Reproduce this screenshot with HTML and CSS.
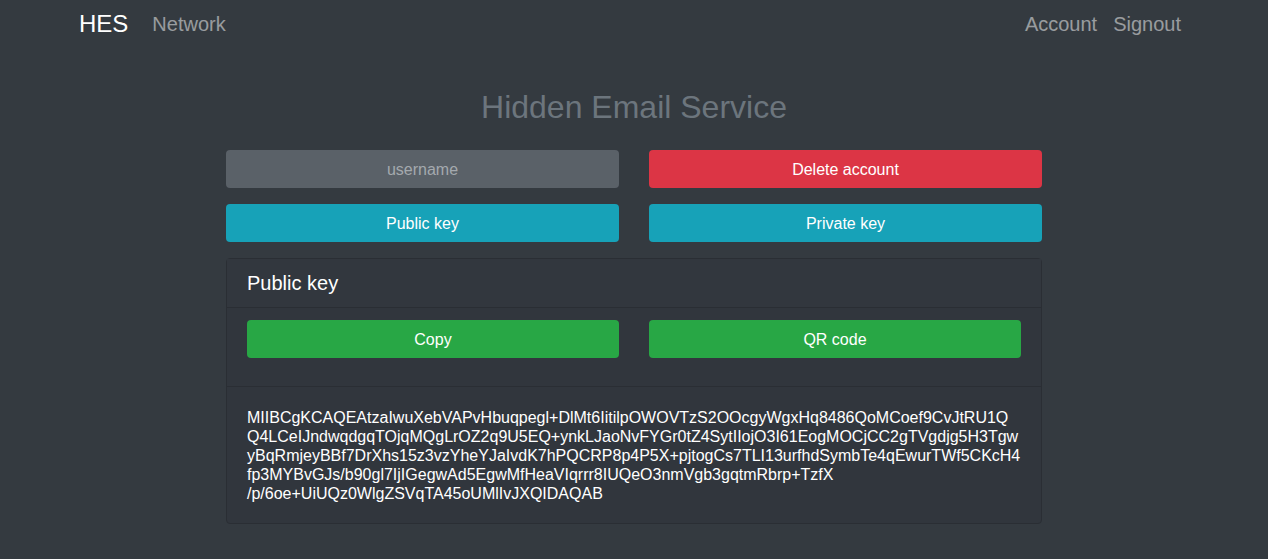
FILE: index.html
```html
<!DOCTYPE html>
<html lang="en">
<head>
<meta charset="utf-8">
<title>HES</title>
<link rel="stylesheet" href="styles.css">
</head>
<body>
<nav class="navbar">
  <div class="nav-left">
    <a class="brand" href="#">HES</a>
    <a class="nav-link" href="#">Network</a>
  </div>
  <div class="nav-right">
    <a class="nav-link" href="#">Account</a>
    <a class="nav-link" href="#">Signout</a>
  </div>
</nav>
<main class="main">
  <h1 class="title">Hidden Email Service</h1>
  <div class="grid">
    <div class="field">username</div>
    <button class="btn btn-danger">Delete account</button>
    <button class="btn btn-info">Public key</button>
    <button class="btn btn-info">Private key</button>
  </div>
  <section class="card">
    <div class="card-header">Public key</div>
    <div class="card-actions">
      <button class="btn btn-success">Copy</button>
      <button class="btn btn-success">QR code</button>
    </div>
    <div class="card-body">MIIBCgKCAQEAtzaIwuXebVAPvHbuqpegl+DlMt6IitilpOWOVTzS2OOcgyWgxHq8486QoMCoef9CvJtRU1Q<br>Q4LCeIJndwqdgqTOjqMQgLrOZ2q9U5EQ+ynkLJaoNvFYGr0tZ4SytIIojO3I61EogMOCjCC2gTVgdjg5H3Tgw<br>yBqRmjeyBBf7DrXhs15z3vzYheYJaIvdK7hPQCRP8p4P5X+pjtogCs7TLI13urfhdSymbTe4qEwurTWf5CKcH4<br>fp3MYBvGJs/b90gl7IjIGegwAd5EgwMfHeaVIqrrr8IUQeO3nmVgb3gqtmRbrp+TzfX<br>/p/6oe+UiUQz0WlgZSVqTA45oUMlIvJXQIDAQAB</div>
  </section>
</main>
</body>
</html>
```
FILE: styles.css
```css
* { box-sizing: border-box; }
html, body { margin: 0; padding: 0; }
body {
  background: #343a40;
  font-family: "Liberation Sans", Arial, sans-serif;
  color: #fff;
  font-size: 16px;
  min-height: 559px;
}
a { text-decoration: none; }
.navbar {
  width: 1110px;
  margin: 0 auto;
  height: 48px;
  display: flex;
  justify-content: space-between;
  align-items: center;
}
.nav-left, .nav-right { display: flex; align-items: center; }
.brand {
  color: #fff;
  font-size: 24px;
  margin-right: 24px;
  line-height: 1;
}
.nav-link {
  color: rgba(255,255,255,.5);
  font-size: 20px;
  line-height: 1;
}
.nav-right .nav-link { margin-left: 16px; }
.nav-right { margin-right: 8px; }
.main {
  width: 816px;
  margin: 0 auto;
}
.title {
  margin: 40px 0 23px;
  text-align: center;
  font-weight: 400;
  font-size: 32px;
  line-height: 39px;
  color: #6c757d;
}
.grid {
  display: grid;
  grid-template-columns: 1fr 1fr;
  column-gap: 30px;
  row-gap: 16px;
  margin-bottom: 16px;
}
.field, .btn {
  height: 38px;
  border-radius: 4px;
  border: 0;
  font-family: inherit;
  font-size: 16px;
  display: flex;
  align-items: center;
  justify-content: center;
  color: #fff;
  padding: 2px 0 0;
}
.field { background: #5a6168; color: #a4a9ae; }
.btn-danger { background: #dc3545; }
.btn-info { background: #17a2b8; }
.btn-success { background: #28a745; }
.card {
  background: #31363d;
  border: 1px solid #2a2e34;
  border-radius: 4px;
}
.card-header {
  height: 49px;
  padding: 0 20px;
  display: flex;
  align-items: center;
  font-size: 20px;
  border-bottom: 1px solid #2a2e34;
  background: #32373e;
}
.card-actions {
  display: grid;
  grid-template-columns: 372px 372px;
  column-gap: 30px;
  padding: 12px 20px 28px;
  border-bottom: 1px solid #2a2e34;
}
.card-body {
  padding: 21px 20px 20px;
  line-height: 19px;
  font-size: 16px;
}
```
